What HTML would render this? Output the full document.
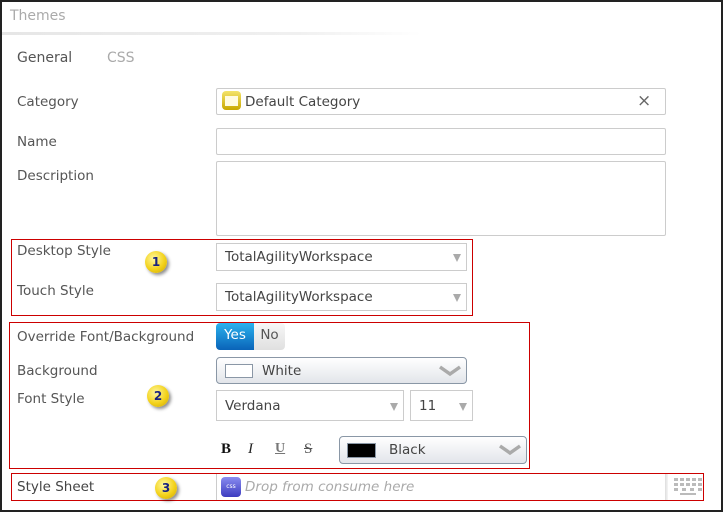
<!DOCTYPE html>
<html><head><style>
body{margin:0;width:723px;height:512px;overflow:hidden;background:#fff;font-family:"DejaVu Sans","Liberation Sans",sans-serif;font-size:13.5px;color:#555;}
.a{position:absolute}
.frame{left:0;top:0;width:719px;height:508px;border:2px solid #222}
.inp{border:1px solid #ccc;border-radius:2px;background:#fff;box-sizing:border-box}
.red{border:1px solid #c00;box-sizing:border-box}
.sel{border:1px solid #ccc;box-sizing:border-box;background:#fff;color:#444;padding-left:8px;display:flex;align-items:center}
.tri{position:absolute;right:5px;top:50%;margin-top:-3px;border-left:4px solid transparent;border-right:4px solid transparent;border-top:8px solid #aaa}
.grad{border:1px solid #8a97a6;border-radius:4px;box-sizing:border-box;background:linear-gradient(#fff,#e2e5ea);display:flex;align-items:center;color:#444}
.badge{width:22px;height:22px;border-radius:50%;background:radial-gradient(circle at 40% 35%,#fff8a0,#f3d21a 55%,#c9a200);box-shadow:2px 2px 3px rgba(0,0,0,.45);color:#1a237e;font-weight:bold;font-size:12px;text-align:center;line-height:22px}
.lbl{left:17px}
</style></head><body>
<div class="a frame"></div>
<div class="a" style="left:10px;top:8px;color:#aaa;font-size:14px">Themes</div>
<div class="a" style="left:2px;top:32px;width:420px;height:3px;background:linear-gradient(90deg,#e6e6e6,#f0f0f0 70%,#fff)"></div>
<div class="a" style="left:17px;top:50px;color:#555;font-size:14px">General</div>
<div class="a" style="left:107px;top:50px;color:#aaa;font-size:14px">CSS</div>

<div class="a lbl" style="top:94px">Category</div>
<div class="a inp" style="left:216px;top:88px;width:450px;height:27px"></div>
<div class="a" style="left:222px;top:91px;width:19px;height:19px;border-radius:4px;background:linear-gradient(#f3e36a,#c9a800)"><div style="margin:5px 3px;width:13px;height:10px;background:#fffbe0"></div></div>
<div class="a" style="left:245px;top:94px;color:#444">Default Category</div>
<div class="a" style="left:637px;top:91px;color:#666;font-size:17px">×</div>

<div class="a lbl" style="top:134px">Name</div>
<div class="a inp" style="left:216px;top:128px;width:450px;height:27px"></div>
<div class="a lbl" style="top:168px">Description</div>
<div class="a inp" style="left:216px;top:161px;width:450px;height:75px"></div>

<div class="a red" style="left:11px;top:239px;width:462px;height:77px"></div>
<div class="a lbl" style="top:243px">Desktop Style</div>
<div class="a lbl" style="top:283px">Touch Style</div>
<div class="a sel" style="left:216px;top:243px;width:251px;height:28px">TotalAgilityWorkspace<div class="tri"></div></div>
<div class="a sel" style="left:216px;top:283px;width:251px;height:28px">TotalAgilityWorkspace<div class="tri"></div></div>
<div class="a badge" style="left:145px;top:251px">1</div>

<div class="a red" style="left:9px;top:322px;width:521px;height:147px"></div>
<div class="a lbl" style="top:329px">Override Font/Background</div>
<div class="a" style="left:216px;top:323px;width:69px;height:27px;border-radius:4px;overflow:hidden;background:linear-gradient(#f7f7f7,#e0e0e0)">
<div style="position:absolute;left:0;top:0;width:38px;height:27px;background:linear-gradient(#2ab2ee,#0a63b8);color:#fff;text-align:center;line-height:25px">Yes</div>
<div style="position:absolute;left:38px;width:31px;top:0;text-align:center;line-height:25px;color:#555">No</div></div>
<div class="a lbl" style="top:363px">Background</div>
<div class="a grad" style="left:216px;top:357px;width:251px;height:27px"><div style="margin-left:8px;width:26px;height:12px;border:1px solid #8a97a6;background:#fff"></div><span style="margin-left:9px">White</span></div>
<svg class="a" style="left:438px;top:365px" width="24" height="12"><path d="M2 2l10 7 10-7" stroke="#aaa" stroke-width="3.5" fill="none"/></svg>
<div class="a lbl" style="top:391px">Font Style</div>
<div class="a sel" style="left:216px;top:390px;width:188px;height:31px">Verdana<div class="tri"></div></div>
<div class="a sel" style="left:410px;top:390px;width:63px;height:31px">11<div class="tri"></div></div>
<div class="a badge" style="left:147px;top:385px">2</div>
<div class="a" style="left:221px;top:441px;font-family:'Liberation Serif',serif;font-weight:bold;color:#111;font-size:15px">B</div>
<div class="a" style="left:248px;top:441px;font-family:'Liberation Serif',serif;font-style:italic;color:#222;font-size:15px">I</div>
<div class="a" style="left:275px;top:441px;font-family:'Liberation Serif',serif;font-weight:bold;color:#777;font-size:14px;text-decoration:underline">U</div>
<div class="a" style="left:304px;top:441px;font-family:'Liberation Serif',serif;color:#555;font-size:15px;text-decoration:line-through">S</div>
<div class="a grad" style="left:339px;top:436px;width:188px;height:28px"><div style="margin-left:7px;width:27px;height:13px;border:1px solid #8a97a6;background:#000"></div><span style="margin-left:13px">Black</span></div>
<svg class="a" style="left:498px;top:444px" width="24" height="12"><path d="M2 2l10 7 10-7" stroke="#aaa" stroke-width="3.5" fill="none"/></svg>

<div class="a red" style="left:11px;top:473px;width:693px;height:28px"></div>
<div class="a lbl" style="top:479px;color:#444">Style Sheet</div>
<div class="a" style="left:216px;top:474px;width:1px;height:26px;background:#ccc"></div>
<div class="a" style="left:221px;top:477px;width:20px;height:20px;border-radius:4px;background:linear-gradient(#8a8cf0,#3c3cc0);color:#fff;font-size:6px;text-align:center;line-height:20px">css</div>
<div class="a" style="left:245px;top:479px;color:#aaa;font-style:italic">Drop from consume here</div>
<div class="a" style="left:665px;top:474px;width:3px;height:26px;background:linear-gradient(90deg,#ddd,#f5f5f5)"></div>
<svg class="a" style="left:672px;top:477px" width="32" height="20"><g fill="#bbb"><rect x="2" y="1" width="4" height="3"/><rect x="8" y="1" width="4" height="3"/><rect x="14" y="1" width="4" height="3"/><rect x="20" y="1" width="4" height="3"/><rect x="26" y="1" width="4" height="3"/><rect x="2" y="6" width="4" height="3"/><rect x="8" y="6" width="4" height="3"/><rect x="14" y="6" width="4" height="3"/><rect x="20" y="6" width="4" height="3"/><rect x="26" y="6" width="4" height="3"/><rect x="2" y="11" width="4" height="3"/><rect x="10" y="11" width="4" height="3"/><rect x="18" y="11" width="4" height="3"/><rect x="26" y="11" width="4" height="3"/><rect x="8" y="16" width="16" height="2"/></g></svg>
<div class="a badge" style="left:155px;top:477px">3</div>
</body></html>
